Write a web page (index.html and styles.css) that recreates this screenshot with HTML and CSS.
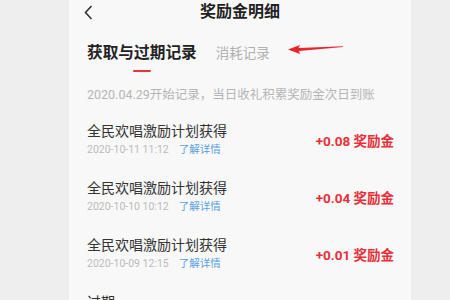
FILE: index.html
```html
<!DOCTYPE html>
<html lang="zh-CN">
<head>
<meta charset="utf-8">
<title>奖励金明细</title>
<link rel="stylesheet" href="styles.css">
</head>
<body>
<div class="panel">
  <div class="header">
    <div class="back">
      <svg width="9" height="15" viewBox="0 0 9 15"><path d="M7.5 1 L1.5 7.5 L7.5 14" fill="none" stroke="#333" stroke-width="1.6"/></svg>
    </div>
    <div class="title">奖励金明细</div>
    <div></div>
  </div>
  <div class="tabs">
    <div class="tab active">
      <span>获取与过期记录</span>
      <i class="bar"></i>
    </div>
    <div class="tab">消耗记录</div>
  </div>
  <svg class="arrow" width="58" height="12" viewBox="0 0 58 12"><polygon points="1,6.5 13,2 11.5,5 56,3.2 56,4 12,8 13,11" fill="#e8262c"/></svg>
  <div class="info">2020.04.29开始记录，当日收礼积累奖励金次日到账</div>
  <div class="list">
    <div class="row">
      <div class="left">
        <div class="name">全民欢唱激励计划获得</div>
        <div class="meta"><span class="date">2020-10-11 11:12</span><span class="link">了解详情</span></div>
      </div>
      <div class="amount">+0.08 奖励金</div>
    </div>
    <div class="row">
      <div class="left">
        <div class="name">全民欢唱激励计划获得</div>
        <div class="meta"><span class="date">2020-10-10 10:12</span><span class="link">了解详情</span></div>
      </div>
      <div class="amount">+0.04 奖励金</div>
    </div>
    <div class="row">
      <div class="left">
        <div class="name">全民欢唱激励计划获得</div>
        <div class="meta"><span class="date">2020-10-09 12:15</span><span class="link">了解详情</span></div>
      </div>
      <div class="amount">+0.01 奖励金</div>
    </div>
  </div>
  <div class="section">过期</div>
</div>
</body>
</html>
```
FILE: styles.css
```css
html, body {
  margin: 0;
  padding: 0;
}
body {
  width: 450px;
  height: 300px;
  overflow: hidden;
  background: #eeeeee;
  font-family: Roboto, "Noto Sans CJK SC", sans-serif;
}
.panel {
  position: relative;
  margin-left: 69px;
  width: 342px;
  height: 300px;
  background: #f8f8f8;
  box-sizing: border-box;
  padding: 0 17px 0 18px;
}
.header {
  display: grid;
  grid-template-columns: 1fr auto 1fr;
  align-items: center;
  height: 24px;
  margin: 0 -17px 0 -18px;
}
.back {
  padding-left: 15px;
  display: flex;
  align-items: center;
  height: 24px;
}
.title {
  font-size: 16px;
  line-height: 24px;
  font-weight: 700;
  color: #222;
}
.tabs {
  display: flex;
  align-items: flex-start;
  gap: 19px;
  margin-top: 18px;
}
.tab {
  font-size: 13.5px;
  line-height: 22px;
  color: #b0b0b0;
}
.tab.active {
  display: flex;
  flex-direction: column;
  align-items: center;
  font-size: 15.7px;
  font-weight: 700;
  color: #222;
}
.bar {
  display: block;
  width: 18px;
  height: 2px;
  margin-top: 6px;
  background: #e8343a;
  border-radius: 1px;
}
.arrow {
  position: absolute;
  left: 218px;
  top: 43px;
}
.info {
  margin-top: 14px;
  font-size: 12.5px;
  line-height: 18px;
  color: #b5b5b5;
}
.list {
  display: flex;
  flex-direction: column;
  gap: 20px;
  margin-top: 17px;
}
.row {
  display: flex;
  align-items: center;
  justify-content: space-between;
}
.name {
  font-size: 14px;
  line-height: 20px;
  color: #333;
}
.meta {
  display: flex;
  gap: 10px;
  font-size: 10.5px;
  line-height: 17px;
}
.date {
  color: #bbbbbb;
}
.link {
  color: #5a9fe2;
}
.amount {
  font-size: 13.5px;
  font-weight: 700;
  color: #e8303a;
}
.section {
  margin-top: 20px;
  font-size: 14px;
  line-height: 20px;
  color: #333;
}
```
